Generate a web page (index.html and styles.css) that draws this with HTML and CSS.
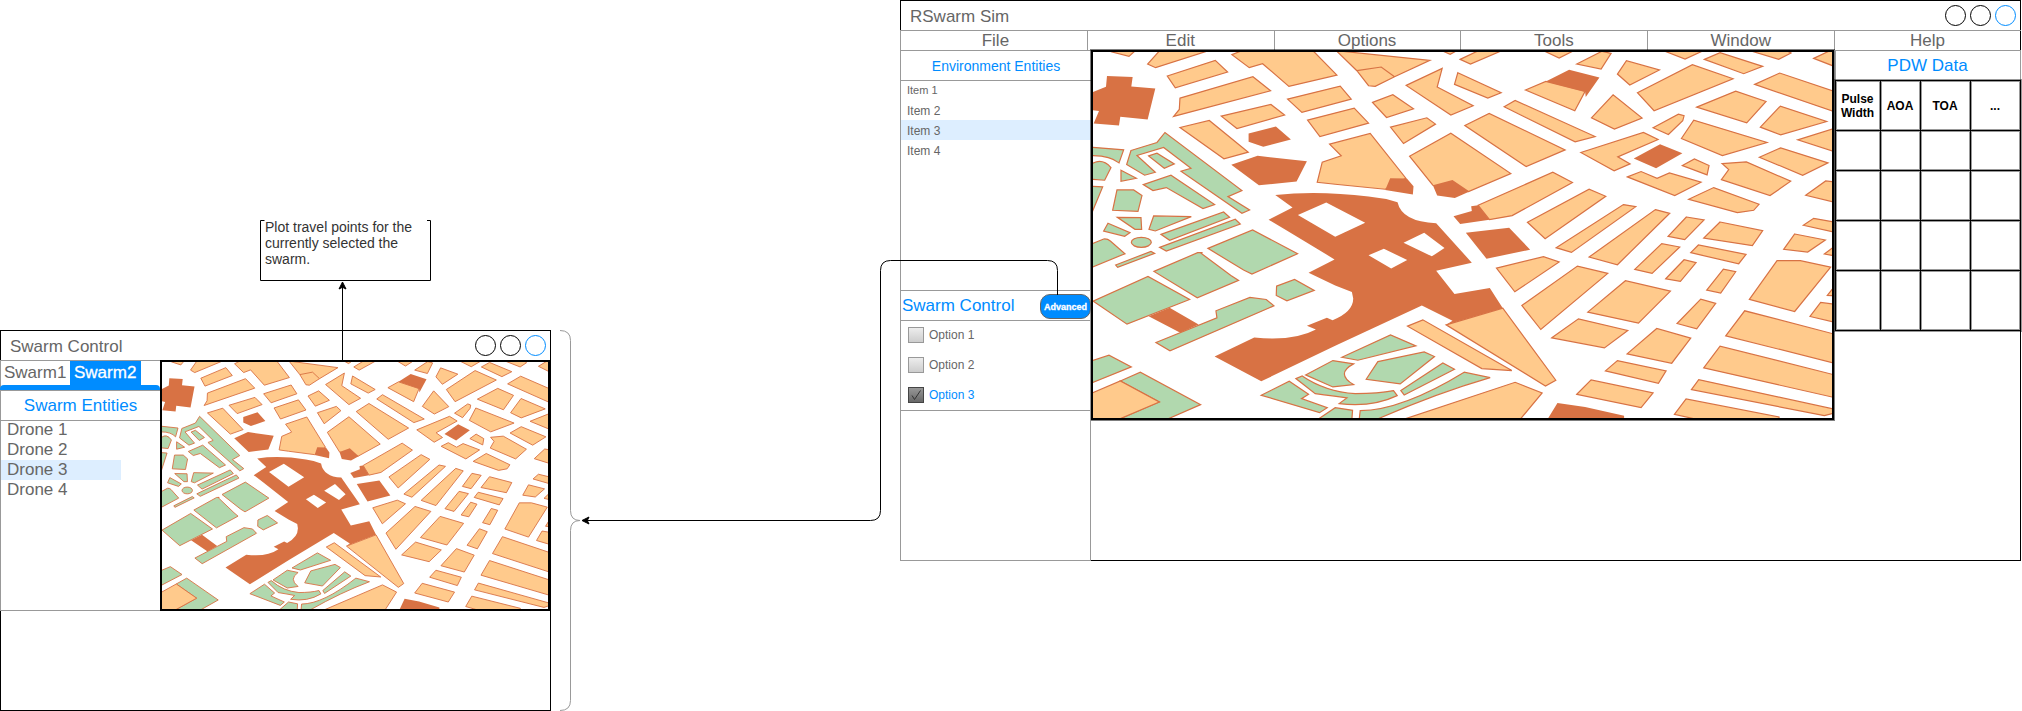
FILE: index.html
```html
<!DOCTYPE html>
<html lang="en">
<head>
<meta charset="utf-8">
<title>RSwarm Sim</title>
<link rel="stylesheet" href="styles.css">
</head>
<body>
<svg class="defs" width="0" height="0" aria-hidden="true">
<defs>
<linearGradient id="box-off" x1="0" y1="0" x2="0" y2="1"><stop offset="0" stop-color="#eee"/><stop offset="1" stop-color="#ccc"/></linearGradient>
<linearGradient id="box-on" x1="0" y1="0" x2="0" y2="1"><stop offset="0" stop-color="#999"/><stop offset="1" stop-color="#666"/></linearGradient>
<symbol id="city" viewBox="8 22 2218 1096" preserveAspectRatio="none">
<g class="mass">
<path fill-rule="evenodd" d="M555 450Q685 436 835 455Q880 459 922 472Q935 530 1038 535L1145 653 1038 677 1093 747 1199 729 1238 789 1068 839 1087 827 995 781 735 902 513 1008 373 934 492 877Q610 889 677 853L650 842 710 818 727 825Q789 800 789 760L785 741 735 721 655 683 733 643 587 555 535 524 607 488ZM623 510L735 575 825 533 708 473ZM940 593L1002 563 1063 609 1025 634ZM835 631L881 611 951 645 903 670Z"/>
<path d="M475 266L557 245 602 284 519 306 475 291ZM423 360L502 333 650 349 619 410 506 421ZM4 143L47 126 50 94 127 97 123 125 195 131 172 224 90 216 86 242 10 236 26 199 4 196ZM175 813L238 788 325 838 270 863Z"/>
<path d="M1127 563L1257 548 1320 614 1189 641ZM1372 1122L1402 1073 1485 1085 1602 1111 1602 1122ZM1631 341L1710 298 1777 325 1698 370Z"/>
</g>
<g class="park">
<path d="M4 307L100 315 86 354Q60 332 4 332ZM4 357Q35 338 62 368L43 406 4 403ZM4 424L37 426 4 505ZM92 376L138 400 92 409ZM80 435L130 435 155 452 143 499 67 496ZM81 517L152 518 154 553 134 553ZM190 513L303 515 195 558 176 553ZM53 535L119 563 103 574 40 558Z"/>
<path d="M122 317L200 293 224 263 455 437 413 455 478 495 455 505 272 379 302 370 220 308 140 332 195 382 163 391 109 359ZM175 333L200 325 252 357 222 370ZM159 419L242 391 373 479 338 491 228 428 188 437ZM212 568L400 501 418 517 238 586ZM208 607L435 523 450 537 228 618Z"/>
<ellipse cx="153" cy="592" rx="30" ry="15"/>
<g transform="translate(0 555)">
<path d="M4 42L40 27Q52 26 60 33L104 71 4 112ZM76 105L182 64 193 70 82 112ZM353 55L487 0 622 71 485 132 460 120ZM191 124L322 68 337 68 330 68 422 136 445 151 321 203ZM8 213L173 139 298 208 110 282ZM197 337L380 263 377 242 479 202 528 208 551 227 239 362ZM559 168L613 148 672 181 590 212 558 196ZM4 392L56 375 123 410 4 458ZM90 452L150 426 331 523 230 567 85 567 207 515ZM513 495L597 453 655 492 634 505 711 532 688 547Z"/>
</g>
<g transform="translate(735 555)">
<path d="M-118 445L-99 437Q-30 484 60 490 130 490 175 481L186 496Q110 532 12 520L35 503Q-5 497 -60 490ZM-89 434L-7 391 55 401Q0 430 55 463L-7 470ZM20 381L166 314 242 347 68 390ZM128 394L267 365 298 379 195 461 93 447ZM197 481L323 398 358 417 207 494ZM75 541Q200 540 387 426L465 442Q300 490 125 567L72 567ZM-52 567L0 532 52 540 50 567Z"/>
</g>
</g>
<g class="block">
<path d="M55 18L65 22 116 35 135 18ZM208 18L172 58 196 69 355 18ZM231 94L375 47 412 82 255 129ZM269 160L488 96 541 138 250 215 267 194ZM393 214L542 179 583 211 440 251ZM269 248L357 227 474 322 401 342ZM425 30L455 18 668 18 740 91 596 125 517 57 477 69ZM592 163L750 124 783 163 635 203ZM652 226L792 190 835 235 689 275ZM718 298L840 266 947 400 885 433 735 418 681 412 696 352 753 333 718 298ZM4 1044L90 1007 207 1070 85 1122 4 1122Z"/>
<g transform="translate(735 0)">
<path d="M3 18L284 47 178 96 120 125 100 123 65 78ZM65 78L138 67 178 96M320 18L345 29 365 18ZM375 44L406 58 500 18 430 18ZM625 18L672 40 716 18ZM725 58L800 20 828 26 798 73ZM571 136L632 110 750 140 719 198ZM213 122L321 71 306 127 414 183 347 211ZM368 84L498 144 458 160 358 119ZM112 173L173 150 235 192 154 218ZM166 247L275 219 301 238 205 296ZM223 334L347 265 527 386 400 440 293 421ZM389 242L462 206 690 315 573 365ZM507 186L540 167 780 275 720 291ZM429 481L653 382 712 413 531 512 463 524ZM577 532L762 433 812 454 630 581Z"/>
</g>
<g transform="translate(1485 0)">
<path d="M-13 323L175 263 219 284 98 336 135 357 87 378ZM115 479L152 485 -41 622 -87 608ZM235 18L300 43 355 18ZM358 44L405 24 533 65 476 87ZM495 18L581 44 618 25 605 18ZM686 41L735 18 745 18 745 64ZM97 88L124 48 223 76 134 121ZM157 144L322 60 444 102 207 198ZM509 119L584 85 745 139 745 200ZM335 187L452 139 543 170 485 234ZM19 219L84 150 171 220 88 253ZM204 249L280 208 297 213 293 228 250 269ZM526 247L586 184 725 230 587 270ZM289 281L326 226 546 293 412 332ZM638 285L745 252 745 319ZM292 362L328 342 372 362 366 390ZM523 337L587 309 729 354 653 391ZM411 356L484 351 617 409 555 452 409 404 431 374ZM127 396L168 380 216 400 253 384 348 412 269 452ZM662 451L722 408 745 411 745 471ZM311 463L386 428 522 478 506 496 457 503ZM655 541L686 520 745 531 745 561ZM211 494L254 505 97 659 12 636ZM304 516L357 525 299 584 249 574ZM405 531L533 557 502 602 356 579Z"/>
</g>
<g transform="translate(735 555)">
<path d="M217 288L263 269 530 421 440 415ZM333 284L503 234 662 450 631 467ZM205 567L540 456 621 488 555 567ZM484 114L625 80 672 96 539 185ZM560 226L727 108 818 130 617 298ZM650 323L730 266 878 301 808 353ZM725 492L768 449 954 488 918 532Z"/>
</g>
<g transform="translate(1485 555)">
<path d="M629 12L721 30 668 66 596 58ZM718 72L745 52 745 77ZM149 118L230 41 284 51 201 130ZM317 68L340 45 483 73 461 101ZM242 146L297 89 333 98 286 154ZM365 180L415 117 452 125 407 189ZM493 208L576 92 646 92 737 111 629 244ZM727 196L745 173 745 197ZM675 259L707 217 745 222 745 275ZM8 246L121 152 256 183 160 279ZM276 280L347 207 392 220 335 296ZM126 371L215 295 317 324 260 399ZM61 422L97 391 243 422 220 459ZM422 317L479 242 745 311 745 398ZM356 413L405 348 745 433 745 501ZM319 478L341 448 745 536 745 549 718 556ZM268 552L303 506 582 560 582 567 335 567Z"/>
</g>
</g>
<path class="mass" d="M900 400L950 401 970 424 968 449 885 435ZM1028 421L1087 405 1138 440 1094 459 1041 452ZM1367 110L1437 75 1528 98 1487 157 1485 141ZM1090 514L1145 498 1143 484 1164 481 1198 524 1110 537Z"/>
</symbol>
</defs>
</svg>

<main class="canvas">
  <section class="window window-main">
    <header class="titlebar"><span>RSwarm Sim</span><div class="controls"><i></i><i></i><i class="accent"></i></div></header>
    <nav class="menu"><span class="first">File</span><span>Edit</span><span>Options</span><span>Tools</span><span>Window</span><span>Help</span></nav>
    <div class="workspace">
      <aside class="entities">
        <h2 class="head head-small">Environment Entities</h2>
        <ul class="items"><li class="tiny">Item 1</li><li>Item 2</li><li class="selected">Item 3</li><li>Item 4</li></ul>
        <div class="swarm">
          <div class="swarm-head"><h2>Swarm Control</h2><button class="advanced">Advanced</button></div>
          <ul class="options">
            <li><svg width="16" height="16"><rect x=".5" y=".5" width="15" height="15" fill="url(#box-off)" stroke="#999"/></svg><span>Option 1</span></li>
            <li><svg width="16" height="16"><rect x=".5" y=".5" width="15" height="15" fill="url(#box-off)" stroke="#999"/></svg><span>Option 2</span></li>
            <li class="on"><svg width="16" height="16"><rect x=".5" y=".5" width="15" height="15" fill="url(#box-on)" stroke="#444"/><path d="M4 8.5L6.500 12.500L12.500 3.500" fill="none" stroke="#333"/></svg><span>Option 3</span></li>
          </ul>
        </div>
      </aside>
      <svg class="map map-main"><use href="#city" width="100%" height="100%"/></svg>
      <aside class="data">
        <h2 class="head">PDW Data</h2>
        <div class="grid">
          <b>Pulse<br>Width</b><b>AOA</b><b>TOA</b><b>...</b>
          <b></b><b></b><b></b><b></b>
          <b></b><b></b><b></b><b></b>
          <b></b><b></b><b></b><b></b>
          <b></b><b></b><b></b><b></b>
        </div>
      </aside>
    </div>
  </section>

  <section class="window window-swarm">
    <header class="titlebar"><span>Swarm Control</span><div class="controls"><i></i><i></i><i class="accent"></i></div></header>
    <div class="swarm-body">
      <aside class="drones">
        <div class="tabs"><span>Swarm1</span><span class="active">Swarm2</span></div>
        <div class="tab-bar"></div>
        <h2 class="head">Swarm Entities</h2>
        <ul class="drone-list"><li>Drone 1</li><li>Drone 2</li><li class="selected">Drone 3</li><li>Drone 4</li></ul>
      </aside>
      <svg class="map map-swarm"><use href="#city" width="100%" height="100%"/></svg>
    </div>
  </section>

  <p class="note">Plot travel points for the currently selected the swarm.</p>

  <svg class="links" width="2022" height="711">
    <path class="wire" d="M264.500 220.500H260.500V280.500H430.500V220.500H427"/>
    <path class="wire" d="M342.500 360V287"/>
    <path class="tip" d="M342.500 282L346 289L342.500 287.300L339 289Z"/>
    <path class="wire" d="M1057.500 295V270.500Q1057.500 260.500 1047.500 260.500H890.500Q880.500 260.500 880.500 270.500V510.500Q880.500 520.500 870.500 520.500H587"/>
    <path class="tip" d="M582 520.500L589 517L587.300 520.500L589 524Z"/>
    <path class="brace" d="M560 330.500Q570.500 330.500 570.500 340.500V510.500Q570.500 520.500 580 520.500Q570.500 520.500 570.500 530.500V700.500Q570.500 710.500 560 710.500"/>
  </svg>
</main>
</body>
</html>
```
FILE: styles.css
```css
* { box-sizing: border-box; }
body { margin: 0; background: #fff; font-family: "Liberation Sans", Arial, sans-serif; font-size: 17px; color: #666; }
h2, ul, p { margin: 0; padding: 0; font-weight: 400; font-size: inherit; list-style: none; }
.defs { position: absolute; }
.canvas { position: relative; width: 2022px; height: 711px; overflow: hidden; }

.window { position: absolute; display: flex; flex-direction: column; border: 1px solid #000; background: #fff; }
.window-main { left: 900px; top: 0; width: 1121px; height: 561px; }
.window-swarm { left: 0; top: 330px; width: 551px; height: 381px; }
.titlebar { height: 29px; flex: none; display: flex; align-items: center; justify-content: space-between; padding: 2px 4px 0 9px; }
.controls { display: flex; gap: 4px; margin-top: -2px; }
.controls i { width: 21px; height: 21px; border: 1px solid #000; border-radius: 50%; }
.controls .accent { border-color: #008cff; }

.menu { height: 20px; flex: none; margin: 0 -1px; display: grid; grid-template-columns: repeat(6, 1fr); border-top: 1px solid #999; }
.menu span { border-left: 1px solid #999; text-align: center; line-height: 19px; padding-right: 1px; }
.menu .first { padding: 0 0 0 3px; }
.workspace { display: flex; flex: none; height: 511px; margin: 0 -1px -1px; align-items: flex-start; }

.head { height: 31px; border: 1px solid #999; border-right: 0; color: #008cff; text-align: center; line-height: 29px; }
.head-small { font-size: 14px; line-height: 30px; }
.entities { width: 191px; height: 511px; flex: none; border-bottom: 1px solid #999; display: flex; flex-direction: column; }
.items { flex: none; height: 209px; border-left: 1px solid #999; font-size: 12px; }
.items li { height: 20px; line-height: 22px; padding-left: 6px; }
.items .tiny { font-size: 11px; height: 19px; line-height: 18px; }
.selected { background: #def; }
.swarm { position: relative; z-index: 1; flex: 1; border: 1px solid #999; border-width: 1px 1px 0; background: #fff; }
.swarm-head { display: flex; justify-content: space-between; align-items: center; height: 30px; border-bottom: 1px solid #999; color: #008cff; padding-left: 1px; }
.advanced { width: 51px; height: 25px; margin: 2px -1px 0 0; padding: 0; flex: none; border: 1px solid #666; border-radius: 10px; background: #008cff; color: #fff; font: 700 9px "Liberation Sans", Arial, sans-serif; -webkit-text-stroke: .3px #fff; }
.options { height: 90px; border-bottom: 1px solid #999; font-size: 12px; }
.options li { height: 30px; display: flex; align-items: center; gap: 5px; padding: 0 0 2px 7px; }
.options .on { color: #008cff; }

.map { display: block; flex: none; border: 2px solid #000; background: #fff; }
.map-main { width: 743px; height: 370px; box-shadow: 0 0 0 1px rgba(0, 0, 0, .5); stroke-width: 1.2px; }
.map-swarm { width: 391px; height: 251px; border-right-width: 3px; stroke-width: .9px; }
.mass { fill: #d87244; }
.park { fill: #b1d8ae; stroke: #d87244; }
.block { fill: #ffca8c; stroke: #d87244; }
.park path, .park ellipse, .block path { vector-effect: non-scaling-stroke; }

.data { width: 186px; margin-left: 1px; }
.data .head { border-right: 1px solid #999; padding-right: 1px; }
.grid { display: grid; grid-template-columns: 45px 40px 50px 50px; grid-template-rows: 50px 40px 50px 50px 60px; width: 186px; margin-top: -1px; border: solid #000; border-width: 1px 0 0 1px; box-shadow: 0 0 0 1px rgba(0, 0, 0, .4); }
.grid b { display: flex; align-items: center; justify-content: center; border: solid #000; border-width: 0 1px 1px 0; box-shadow: inset 0 0 0 1px rgba(0, 0, 0, .4); font-size: 12px; line-height: 14px; text-align: center; color: #000; padding-right: 1px; }

.swarm-body { display: flex; flex: none; margin: 0 -1px; }
.drones { width: 160px; height: 251px; border: solid #999; border-width: 1px 0 1px 1px; }
.tabs { display: flex; height: 24px; margin-left: -1px; }
.tabs span { width: 70px; padding-left: 4px; line-height: 24px; }
.tabs .active { width: 71px; background: #008cff; color: #fff; -webkit-text-stroke: .3px #fff; }
.tab-bar { height: 5px; margin-left: -1px; background: #008cff; border-radius: 4px 4px 0 0; }
.drones .head { margin-left: -1px; }
.drone-list li { height: 20px; line-height: 20px; padding-left: 6px; }
.drone-list li.selected { width: 120px; }
.drone-list { margin-top: -1px; }

.note { position: absolute; left: 265px; top: 219px; width: 162px; font-size: 14px; line-height: 16px; color: #333; }
.links { position: absolute; left: 0; top: 0; pointer-events: none; z-index: 2; }
.wire { fill: none; stroke: #000; }
.tip { fill: #000; stroke: #000; }
.brace { fill: none; stroke: #999; }
```
